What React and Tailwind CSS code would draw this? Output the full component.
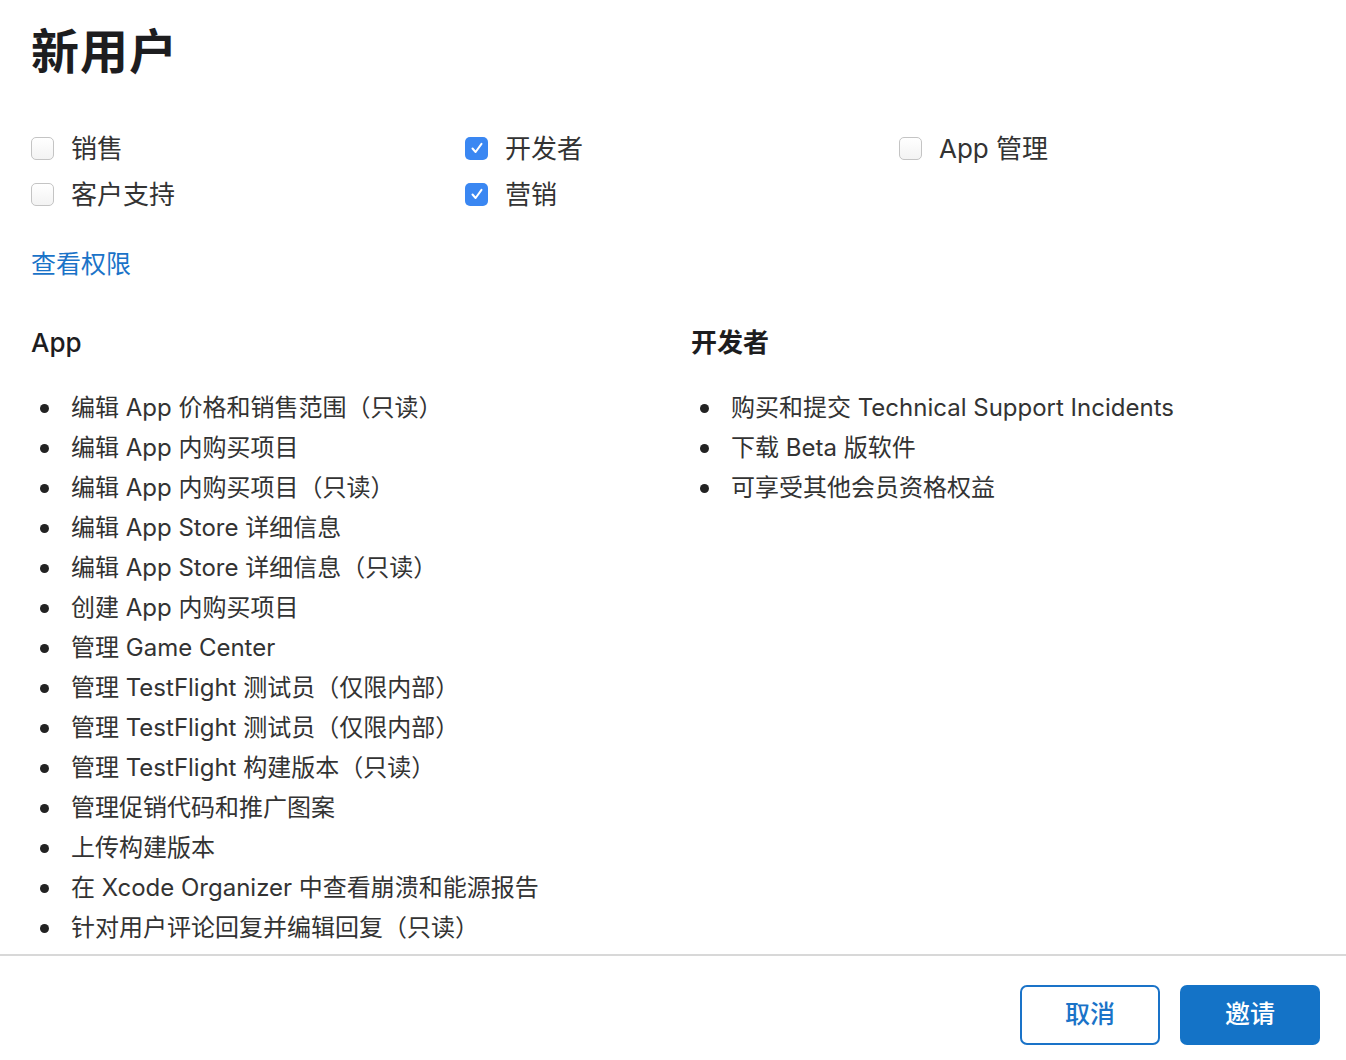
import { useState } from "react";

const roles = [
	[
		{ label: "销售", checked: false },
		{ label: "客户支持", checked: false },
	],
	[
		{ label: "开发者", checked: true },
		{ label: "营销", checked: true },
	],
	[{ label: "App 管理", checked: false }],
];

const appPerms = [
	"编辑 App 价格和销售范围（只读）",
	"编辑 App 内购买项目",
	"编辑 App 内购买项目（只读）",
	"编辑 App Store 详细信息",
	"编辑 App Store 详细信息（只读）",
	"创建 App 内购买项目",
	"管理 Game Center",
	"管理 TestFlight 测试员（仅限内部）",
	"管理 TestFlight 测试员（仅限内部）",
	"管理 TestFlight 构建版本（只读）",
	"管理促销代码和推广图案",
	"上传构建版本",
	"在 Xcode Organizer 中查看崩溃和能源报告",
	"针对用户评论回复并编辑回复（只读）",
];

const devPerms = [
	"购买和提交 Technical Support Incidents",
	"下载 Beta 版软件",
	"可享受其他会员资格权益",
];

function Checkbox({ label, defaultChecked }) {
	const [checked, setChecked] = useState(defaultChecked);
	return (
		<label
			className="flex items-center h-[46px] cursor-pointer"
			onClick={() => setChecked((c) => !c)}
		>
			<span
				className={`w-[23px] h-[23px] rounded-[5px] flex items-center justify-center ${
					checked
						? "bg-[#3a87f2]"
						: "border border-[#c4c4c4] bg-gradient-to-b from-white to-[#f3f3f3]"
				}`}
			>
				{checked && (
					<svg width="14" height="14" viewBox="0 0 14 14" fill="none">
						<path
							d="M2.5 7.5 L5.6 11 L11.5 2.8"
							stroke="white"
							strokeWidth="2"
							strokeLinecap="round"
							strokeLinejoin="round"
						/>
					</svg>
				)}
			</span>
			<span className="ml-[17px] text-[26px] text-[#333]">{label}</span>
		</label>
	);
}

function PermList({ items }) {
	return (
		<ul className="mt-[27px]">
			{items.map((item, i) => (
				<li key={i} className="flex items-center h-[40px] text-[24px] text-[#333]">
					<span className="w-[9px] h-[9px] rounded-full bg-[#222] ml-[9px] mr-[22px]" />
					{item}
				</li>
			))}
		</ul>
	);
}

export default function App() {
	return (
		<div
			className="w-[1346px] h-[1060px] bg-white flex flex-col"
			style={{ fontFamily: '"Inter", "Noto Sans CJK SC", sans-serif' }}
		>
			<div className="flex-1 pl-[31px]">
				<h1 className="text-[48px] font-semibold text-[#1d1d1f] mt-[22px] leading-[60px] tracking-[1px]">
					新用户
				</h1>

				<div className="flex mt-[43px]">
					{roles.map((col, i) => (
						<div key={i} className="w-[434px] flex flex-col">
							{col.map((r) => (
								<Checkbox key={r.label} label={r.label} defaultChecked={r.checked} />
							))}
						</div>
					))}
				</div>

				<a href="#" className="block mt-[28px] text-[25px] text-[#1a73c8] leading-[38px] w-fit">
					查看权限
				</a>

				<div className="flex mt-[42px]">
					<div className="w-[660px]">
						<h2 className="text-[26px] font-medium text-[#1d1d1f] leading-[36px]">App</h2>
						<PermList items={appPerms} />
					</div>
					<div>
						<h2 className="text-[26px] font-semibold text-[#1d1d1f] leading-[36px]">开发者</h2>
						<PermList items={devPerms} />
					</div>
				</div>
			</div>

			<div className="h-[106px] border-t-2 border-[#d8d8d8] flex justify-end items-start pt-[29px] pr-[26px] gap-[20px]">
				<button className="w-[140px] h-[60px] rounded-[7px] border-2 border-[#1a73c8] text-[#1a73c8] text-[25px] font-medium">
					取消
				</button>
				<button className="w-[140px] h-[60px] rounded-[7px] bg-[#1473c7] text-white text-[25px] font-medium">
					邀请
				</button>
			</div>
		</div>
	);
}
